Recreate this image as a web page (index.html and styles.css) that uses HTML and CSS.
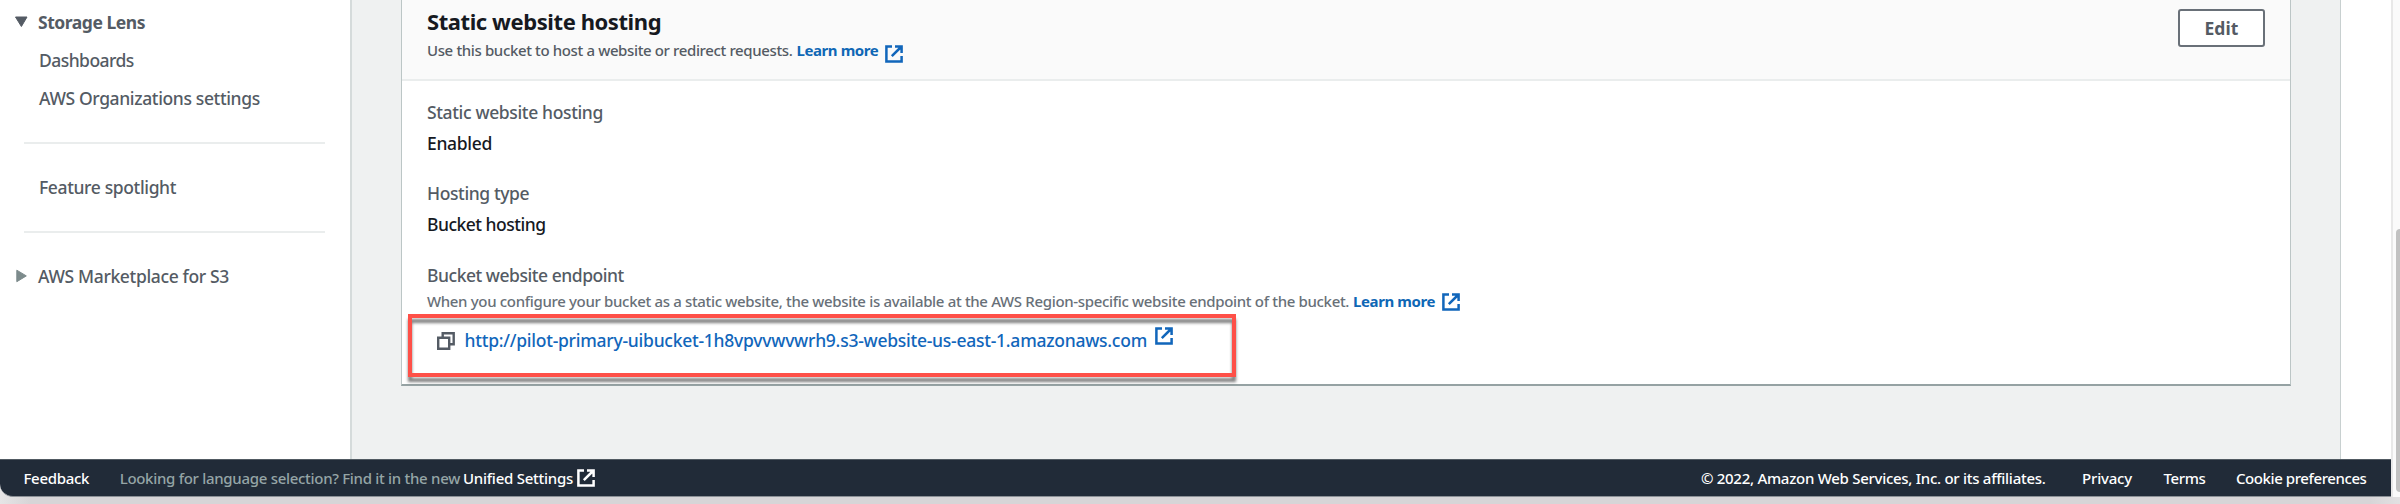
FILE: index.html
```html
<!DOCTYPE html>
<html lang="en">
<head>
<meta charset="utf-8">
<title>Static website hosting</title>
<link rel="stylesheet" href="styles.css">
</head>
<body>
<svg width="0" height="0" class="defs">
  <symbol id="external" viewBox="0 0 18 18">
    <path d="M7 1.400H1.400v15.200h15.200V11M10 1.400h6.600V8M16 2 6.800 11.200" fill="none" stroke="currentColor" stroke-width="2.500"/>
  </symbol>
</svg>
<div class="window">
  <div class="workspace">
    <nav class="sidebar">
      <div class="nav-group"><svg class="caret" viewBox="0 0 14 14"><path d="M1.500 2H13L7.400 11.500z" fill="#545b64" stroke="#545b64" stroke-linejoin="round"/></svg><span class="nav-title">Storage Lens</span></div>
      <a class="nav-item dashboards">Dashboards</a>
      <a class="nav-item">AWS Organizations settings</a>
      <hr class="divider">
      <a class="nav-item">Feature spotlight</a>
      <hr class="divider">
      <div class="nav-group marketplace"><svg class="caret" viewBox="0 0 14 14"><path d="M2.800 1.200v11.500L12.300 6.900z" fill="#7d8b8c" stroke="#7d8b8c" stroke-linejoin="round"/></svg><span>AWS Marketplace for S3</span></div>
    </nav>
    <main class="content">
      <section class="panel">
        <header class="panel-header">
          <div>
            <h2 class="title">Static website hosting</h2>
            <p class="hint intro"><span class="intro-text">Use this bucket to host a website or redirect requests.</span><a class="learn">Learn more</a><svg class="ext ext-low"><use href="#external"/></svg></p>
          </div>
          <button class="edit">Edit</button>
        </header>
        <div class="panel-body">
          <div class="field">
            <div class="label">Static website hosting</div>
            <div class="value enabled">Enabled</div>
          </div>
          <div class="field">
            <div class="label hosting">Hosting type</div>
            <div class="value bucket">Bucket hosting</div>
          </div>
          <div class="field">
            <div class="label endpoint">Bucket website endpoint</div>
            <p class="hint note"><span class="note-text">When you configure your bucket as a static website, the website is available at the AWS Region-specific website endpoint of the bucket.</span><a class="learn">Learn more</a><svg class="ext"><use href="#external"/></svg></p>
            <div class="url-row">
              <svg class="copy" viewBox="0 0 18 18"><path d="M1.200 5.700h11v11h-11zM5.700 5.700V1.200h11v11h-4.500" fill="none" stroke="#545b64" stroke-width="2.400"/></svg>
              <a class="url">http://pilot-primary-uibucket-1h8vpvvwvwrh9.s3-website-us-east-1.amazonaws.com</a>
              <svg class="ext ext-high"><use href="#external"/></svg>
            </div>
          </div>
        </div>
        <div class="highlight"></div>
      </section>
    </main>
    <aside class="help"></aside>
  </div>
  <footer class="footer">
    <a class="feedback">Feedback</a>
    <span class="language">Looking for language selection? Find it in the new</span>
    <a class="unified">Unified Settings</a>
    <svg class="ext ext-foot"><use href="#external"/></svg>
    <span class="copyright">© 2022, Amazon Web Services, Inc. or its affiliates.</span>
    <a class="privacy">Privacy</a>
    <a class="terms">Terms</a>
    <a class="cookies">Cookie preferences</a>
  </footer>
  <div class="scrollbar"><div class="thumb"></div></div>
</div>
</body>
</html>
```
FILE: styles.css
```css
* { box-sizing: border-box; }
body {
  margin: 0;
  height: 504px;
  overflow: hidden;
  background: linear-gradient(to right, #e6e5e6 0, #d7d5d7 30px, #d7d5d7 2370px, #e2e1e2 2400px);
  font: 500 17.5px/24px "Noto Sans", sans-serif;
  color: #545b64;
}
h2, p { margin: 0; }
a, span, .label, .value { white-space: nowrap; }
.defs { position: absolute; }
.window {
  display: grid;
  grid-template: 459px 38px / 1fr 9px;
  height: 497px;
  background: #fff;
  border-bottom-left-radius: 13px;
}
.workspace { display: grid; grid-template-columns: 352px 1fr 51px; }

.sidebar { border-right: 2px solid #d5dbdb; padding: 4px 25px 0 14px; }
.nav-group { display: flex; align-items: center; height: 36px; }
.caret { width: 14px; height: 14px; margin-right: 10px; flex: none; }
.nav-title { font-weight: 700; letter-spacing: -.46px; }
.nav-item { display: block; line-height: 38px; padding-left: 25px; letter-spacing: -.37px; }
.dashboards { margin-top: 2px; line-height: 37px; letter-spacing: -.55px; }
.divider { border: 0; height: 2px; background: #eaeded; margin: 25px 0 24px 10px; }
.nav-item + .divider ~ .divider { margin: 25px 0 24px 10px; }
.marketplace { height: 38px; letter-spacing: -.35px; }

.content { background: #eff1f1; padding: 0 49px 0 49px; }
.help { border-left: 1px solid #c8d0d0; }
.panel {
  position: relative;
  height: 386px;
  background: #fff;
  border: 1px solid #bcc6c6;
  border-width: 0 1px 2px 1px;
  border-bottom-color: #95a2a3;
}
.panel-header {
  display: flex;
  justify-content: space-between;
  height: 81px;
  background: #fafafa;
  border-bottom: 2px solid #eaeded;
  padding: 8px 25px 0;
}
.title { font-size: 22px; line-height: 26px; font-weight: 700; letter-spacing: -.42px; color: #16191f; }
.hint { display: flex; font-size: 15px; }
.intro { margin-top: 4px; }
.intro-text { letter-spacing: -.37px; }
.note-text { letter-spacing: -.337px; color: #687078; }
.learn { margin-left: 4px; font-weight: 700; letter-spacing: -.42px; color: #0f67b5; }
.ext { width: 18px; height: 18px; margin: 4px 0 0 7px; flex: none; color: #1166bb; }
.ext-low { margin-top: 7px; }
.edit {
  width: 87px;
  height: 38px;
  margin-top: 1px;
  padding: 0;
  border: 2px solid #697078;
  border-radius: 3px;
  background: #fff;
  color: #545b64;
  font: 700 17.5px/24px "Noto Sans", sans-serif;
  letter-spacing: .1px;
}
.panel-body { padding: 18.6px 0 0 25px; }
.field { height: 81.5px; }
.label { letter-spacing: -.36px; }
.hosting { letter-spacing: -.4px; }
.endpoint { letter-spacing: -.46px; }
.value { margin-top: 7.4px; color: #16191f; }
.enabled { letter-spacing: -.32px; }
.bucket { letter-spacing: -.5px; }
.note { margin-top: 2px; }
.url-row { display: flex; margin: 15.4px 0 0 10px; }
.copy { width: 18px; height: 18px; margin: 4px 9.5px 0 0; flex: none; }
.url { color: #1166bb; letter-spacing: -.25px; }
.ext-high { margin: -1px 0 0 8px; }
.highlight {
  position: absolute;
  left: 6px;
  top: 314px;
  width: 828px;
  height: 63px;
  border: 4px solid #fe5048;
  filter: drop-shadow(0 5px 1.5px rgba(0, 0, 0, .5));
}

.footer {
  display: flex;
  align-items: center;
  background: #212b38;
  border-top: 1px solid #515a62;
  border-bottom: 1px solid #8b9096;
  border-bottom-left-radius: 13px;
  padding: 0 24.5px 0 23.5px;
  font-size: 15px;
  color: #fff;
}
.feedback { letter-spacing: -.3px; margin-right: 30.5px; }
.language { color: #95a5a6; letter-spacing: -.3px; margin-right: 3px; }
.unified { letter-spacing: -.25px; }
.ext-foot { color: #fff; margin: 0 0 0 4px; }
.copyright { margin-left: auto; letter-spacing: -.28px; }
.privacy { margin-left: 36.5px; letter-spacing: -.2px; }
.terms { margin-left: 31.5px; letter-spacing: -.36px; }
.cookies { margin-left: 30.5px; letter-spacing: -.42px; }

.scrollbar {
  grid-column: 2;
  grid-row: 1 / 3;
  background: #fafafa;
  border-left: 2px solid #e8e8e8;
  padding: 229px 0 0 3px;
}
.thumb { height: 263px; background: #c1c1c1; border-radius: 5px 0 0 5px; }
```
